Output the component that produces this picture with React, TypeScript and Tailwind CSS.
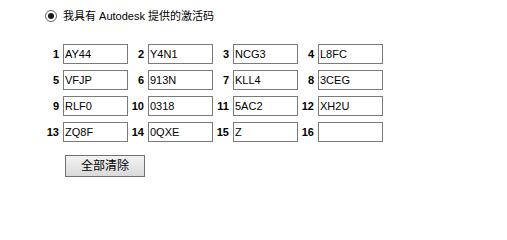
import React from 'react';

const codes = [
  'AY44', 'Y4N1', 'NCG3', 'L8FC',
  'VFJP', '913N', 'KLL4', '3CEG',
  'RLF0', '0318', '5AC2', 'XH2U',
  'ZQ8F', '0QXE', 'Z', '',
];

const App: React.FC = () => {
  return (
    <div className="w-[507px] h-[218px] bg-white text-black font-['Liberation_Sans','Noto_Sans_CJK_SC',sans-serif] text-[11px]">
      <div className="pt-[9px] pl-[45px] flex items-center">
        {/* radio */}
        <div className="w-[12px] h-[12px] rounded-full border border-[#5f5f5f] bg-white flex items-center justify-center">
          <div className="w-[6px] h-[6px] rounded-full bg-[#1a1a1a]" />
        </div>
        <span className="ml-[6px] leading-[14px]">我具有 Autodesk 提供的激活码</span>
      </div>

      <div className="mt-[21px] ml-[43px] grid grid-cols-[repeat(4,85px)] gap-y-[6px] w-fit">
        {codes.map((code, i) => (
          <div key={i} className="flex items-center">
            <span className="w-[16px] mr-[4px] text-right font-bold leading-none">{i + 1}</span>
            <input
              readOnly
              value={code}
              className="w-[65px] h-[20px] border border-[#7a7a7a] bg-white px-[1px] text-[11px] text-black outline-none font-['Liberation_Sans',sans-serif]"
            />
          </div>
        ))}
      </div>

      <div className="mt-[13px] ml-[65px]">
        <button className="w-[80px] h-[22px] border border-[#707070] bg-gradient-to-b from-[#f3f3f3] to-[#dadada] text-[12px] text-black leading-none">
          全部清除
        </button>
      </div>
    </div>
  );
};

export default App;
